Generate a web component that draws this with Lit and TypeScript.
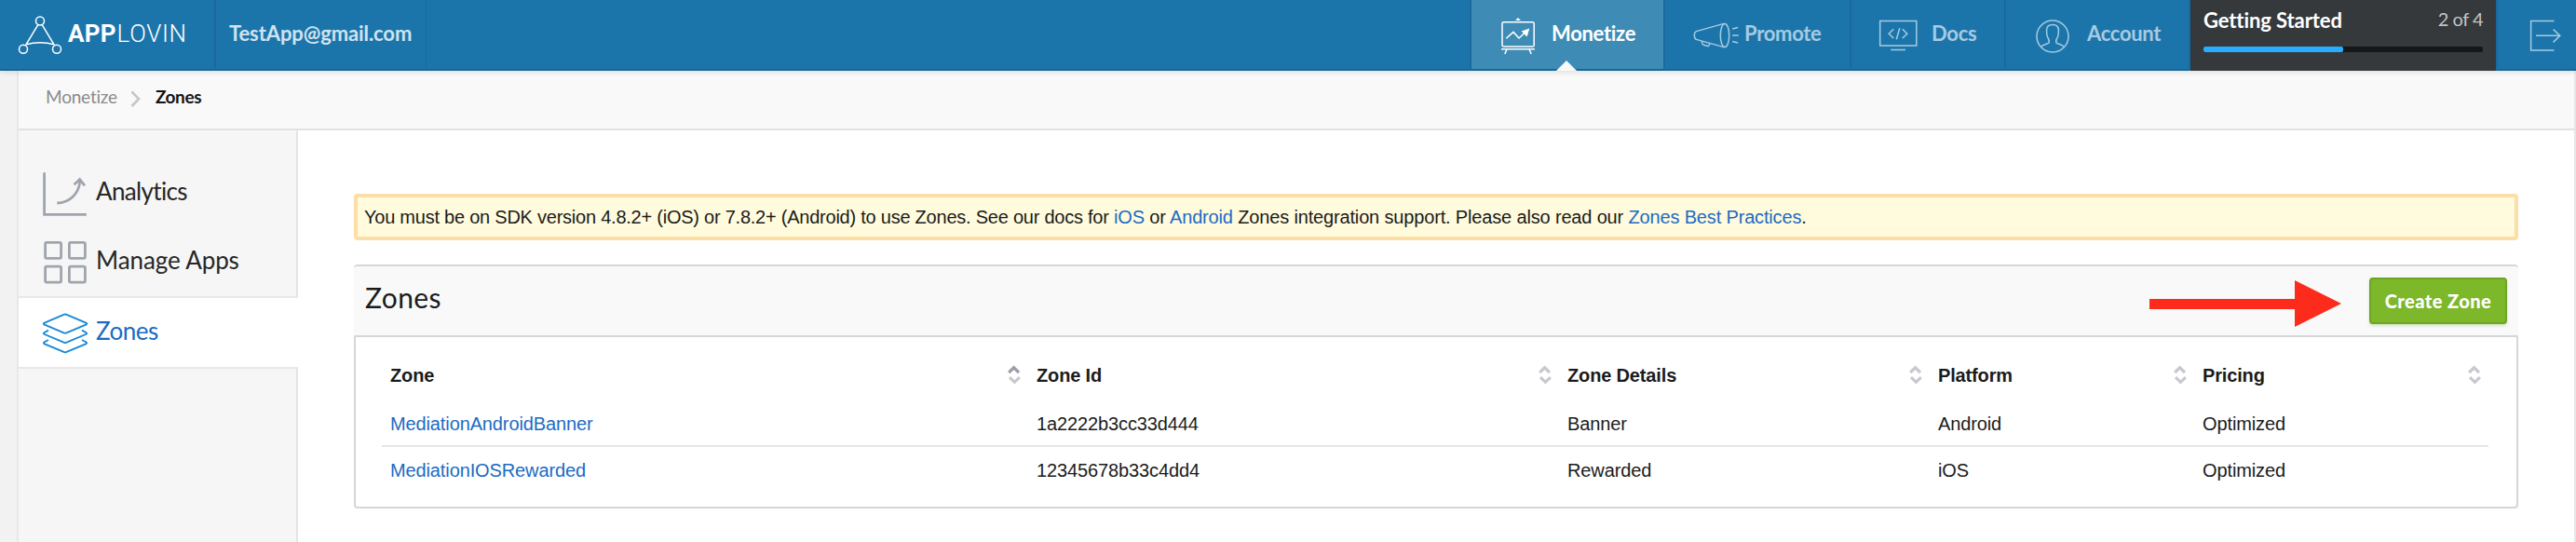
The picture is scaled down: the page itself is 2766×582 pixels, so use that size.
import { LitElement, html, css, svg } from "lit";
import { customElement, property } from "lit/decorators.js";
import { classMap } from "lit/directives/class-map.js";

const columns = ["Zone", "Zone Id", "Zone Details", "Platform", "Pricing"];
const zones = [
  ["MediationAndroidBanner", "1a2222b3cc33d444", "Banner", "Android", "Optimized"],
  ["MediationIOSRewarded", "12345678b33c4dd4", "Rewarded", "iOS", "Optimized"],
];

const logo = svg`
  <circle cx="43" cy="22.5" r="4.5"/><circle cx="25" cy="52.7" r="4.5"/><circle cx="61" cy="52.7" r="4.5"/>
  <path d="M40.8 26.6 28 47.8Q43 43.8 58 47.8L45.2 26.6"/>`;
const board = svg`
  <rect x="1613" y="23.7" width="34.2" height="26.3" rx="1.6"/>
  <path d="M1612 52.8H1648M1618 53l-2.2 5M1642 53l2.2 5"/>
  <path d="M1617.3 41.2 1625 34.4 1631 41 1638.5 34"/>
  <path class="solid" d="M1642.3 30.6 1633.6 33.4 1639.6 39.6ZM1627 22 1630 19 1633 22Z"/>`;
const megaphone = svg`
  <path d="M1851 25.4 1821.5 33.6Q1819.3 34.4 1819.3 38T1821.5 42.4L1851 50.6"/>
  <ellipse cx="1852" cy="38" rx="4.7" ry="12.6"/>
  <path d="M1827 44.2 1828.2 47.3Q1828.6 48 1829.4 48.2L1833.6 49.4Q1834.6 49.6 1835 48.8L1835.8 46.8M1860.2 31l6-1.5M1860.2 38h6.6M1860.2 44.5l6 1.5"/>`;
const monitor = svg`
  <path d="M2018.7 22.6H2057.8V49H2018.7ZM2030.3 53.4H2046" />
  <path d="M2033.2 31.3 2028.2 36.2 2033.2 41M2039.8 30.3 2036.3 42.2M2042.8 31.3 2047.8 36.2 2042.8 41"/>`;
const person = svg`
  <circle cx="2204" cy="39" r="17"/>
  <path d="M2191.7 50.3C2193.5 47.3 2199 47.8 2200.2 45.6 2200.6 43 2199.8 41.6 2198.8 40.2 2197.6 38 2197.6 35 2197.6 32.4 2197.6 28.4 2200 26.4 2204 26.4S2210.4 28.4 2210.4 32.4C2210.4 35 2210.4 38 2209.2 40.2 2208.2 41.6 2207.4 43 2207.8 45.6 2209 47.8 2214.5 47.3 2216.3 50.3"/>`;
const exit = svg`
  <path d="M2742.5 22.6H2717.6V54H2742.5M2723 38.3H2748.6M2741.6 31.6 2748.8 38.3 2741.6 45.4"/>`;
const chart = svg`
  <path d="M47.6 185.3V230.4H92.8M61.3 218C75 217.6 85.2 207.5 85.8 194M79.6 198.3 85.6 192.6 91 199.4"/>`;
const squares = svg`
  <rect x="48.6" y="260.4" width="17" height="17" rx="1.6"/><rect x="74.4" y="260.4" width="17" height="17" rx="1.6"/>
  <rect x="48.6" y="286.2" width="17" height="17" rx="1.6"/><rect x="74.4" y="286.2" width="17" height="17" rx="1.6"/>`;
const layers = svg`
  <path d="M47.3 346.8 69 337.7Q70 337.2 71 337.7L92.7 346.8Q93.8 347.6 92.7 348.4L71 357.5Q70 358 69 357.5L47.3 348.4Q46.2 347.6 47.3 346.8Z"/>
  <path d="M52 354.7 47.4 357.2Q46.4 358 47.4 358.8L69 367.9Q70 368.3 71 367.9L92.6 358.8Q93.6 358 92.6 357.2L88 354.7M52 365 47.4 367.5Q46.4 368.3 47.4 369.1L69 378.2Q70 378.6 71 378.2L92.6 369.1Q93.6 368.3 92.6 367.5L88 365"/>`;

@customElement("app-header")
class AppHeader extends LitElement {
  static styles = css`
    :host { display: flex; position: relative; z-index: 1; height: 76px; box-sizing: border-box; background: #1c75aa;
      font: 700 22px/71px Lato, sans-serif; color: #a5cbe2; white-space: nowrap;
      box-shadow: 0 1px 6px rgba(0, 0, 0, 0.13); }
    .shade { box-shadow: inset 0 -2px 0 #1b6496; }
    svg { display: block; fill: none; stroke: currentColor; stroke-width: 1.5; flex: none; }
    .solid { fill: currentColor; stroke: none; }
    .brand { display: flex; width: 230px; border-right: 2px solid #1a6a9b; color: #fff; }
    .word { font: 700 26px/72px Roboto, sans-serif; letter-spacing: 0.2px; }
    .word span { font-weight: 300; letter-spacing: 0.7px; margin-left: 1px; }
    .user { width: 211px; padding-left: 14px; border-right: 1px solid #1a6a9b; color: #cfe3f0; letter-spacing: -0.1px;
      box-sizing: border-box; width: 226px; }
    .fill { flex: 1; border-right: 2px solid #1a6a9b; }
    .item { display: flex; border-right: 2px solid #1a6a9b; letter-spacing: -0.3px; position: relative; }
    .monetize { width: 206px; background: #3e8bb6; color: #fff; }
    .monetize::after { content: ""; position: absolute; left: 91px; bottom: 0; border: 11px solid transparent; border-top: 0; border-bottom-color: #f9f9f9; }
    .promote { width: 198px; } .docs { width: 164px; } .account { width: 196px; }
    .start { width: 328px; box-sizing: border-box; padding: 0 14px; background: #35393c; color: #fff; }
    .line { display: flex; justify-content: space-between; height: 43px; line-height: 44px; letter-spacing: -0.1px; }
    .count { font-weight: 400; font-size: 20px; line-height: 41px; letter-spacing: -0.5px; color: #c3c4c5; }
    .track { height: 6px; margin-top: 7px; border-radius: 2px; background: #141819; overflow: hidden; }
    .bar { width: 50%; height: 6px; background: #29adff; border-radius: 0 2px 2px 0; }
    .exit { width: 84px; border-left: 2px solid #1a6a9b; }
  `;
  render() {
    const item = (name: string, icon: unknown, label: string, x: number, w: number) => html`
      <div class="item shade ${name}"><svg width=${w} height="76" viewBox="${x} 0 ${w} 76">${icon}</svg>${label}</div>`;
    return html`
      <div class="brand shade"><svg width="73" height="76" viewBox="0 0 73 76">${logo}</svg><div class="word">APP<span>LOVIN</span></div></div>
      <div class="user shade">TestApp@gmail.com</div>
      <div class="fill shade"></div>
      ${item("monetize", board, "Monetize", 1580, 86)}
      ${item("promote", megaphone, "Promote", 1788, 85)}
      ${item("docs", monitor, "Docs", 1988, 86)}
      ${item("account", person, "Account", 2154, 87)}
      <div class="start">
        <div class="line"><span>Getting Started</span><span class="count">2 of 4</span></div>
        <div class="track"><div class="bar"></div></div>
      </div>
      <div class="exit shade"><svg width="84" height="76" viewBox="2682 0 84 76">${exit}</svg></div>`;
  }
}

@customElement("side-nav")
class SideNav extends LitElement {
  static styles = css`
    :host { display: block; width: 300px; box-sizing: border-box; padding-top: 32px; background: #f6f6f6;
      box-shadow: inset -2px 0 0 #e5e5e5; font: 400 26px/66px Lato, sans-serif; color: #272727; }
    .item { display: flex; height: 74px; letter-spacing: -0.1px; }
    .item.tight { letter-spacing: -0.65px; }
    .item.active { height: 72px; padding-top: 2px; background: #fff; color: #1c6bc4; letter-spacing: -0.5px;
      box-shadow: 0 -2px 0 #e8e8e8, 0 2px 0 #e8e8e8; }
    svg { display: block; width: 83px; height: 74px; fill: none; stroke: #9fa4ae; stroke-width: 2.8; flex: none; }
    .active svg { stroke: #1a8ad6; stroke-width: 1.9; height: 72px; }
  `;
  render() {
    return html`
      <div class="item tight"><svg viewBox="20 172 83 74">${chart}</svg>Analytics</div>
      <div class="item"><svg viewBox="20 246 83 74">${squares}</svg>Manage Apps</div>
      <div class="item active"><svg viewBox="20 322 83 72">${layers}</svg>Zones</div>`;
  }
}

@customElement("sort-mark")
class SortMark extends LitElement {
  @property({ type: Boolean }) active = false;
  static styles = css`
    :host { display: block; }
    svg { display: block; fill: none; stroke: #c8c8cf; stroke-width: 3.2; }
    .on { stroke: #9d9daa; }
  `;
  render() {
    return html`<svg width="14" height="22" viewBox="0 0 14 22">
      <path class=${classMap({ on: this.active })} d="M1.2 8 6.6 2.8 12 8"/><path d="M2 13.2 7.4 18.4 12.8 13.2"/></svg>`;
  }
}

@customElement("app-root")
class AppRoot extends LitElement {
  static styles = css`
    :host { display: block; height: 582px; overflow: hidden; background: #f2f2f2; color: #1b1b1b;
      font: 400 20px/50px "Liberation Sans", Arial, sans-serif; }
    .page { margin-left: 20px; height: 506px; border-right: 2px solid #e6e6e6; background: #fff;
      box-shadow: -2px 0 0 #e8e8e8; }
    .crumbs { display: flex; height: 62px; padding-left: 29px; border-bottom: 2px solid #e2e2e2; background: #f9f9f9;
      font: 400 19px/55px Lato, sans-serif; letter-spacing: -0.2px; color: #8b8b8b; }
    .crumbs svg { margin: 21px 15px 0 14px; fill: none; stroke: #c6c6c6; stroke-width: 2.6; }
    .crumbs b { font-weight: 700; letter-spacing: -0.4px; color: #141414; }
    .body { display: flex; height: 442px; }
    .main { flex: 1; padding: 68px 60px 0; }
    .notice { height: 42px; border: 4px solid #fddea6; border-radius: 4px; background: #fffbdc; padding-left: 7px;
      line-height: 42px; letter-spacing: -0.16px; white-space: nowrap; }
    .lead { letter-spacing: -0.235px; }
    a { color: #1c6bc4; text-decoration: none; }
    .head { display: flex; justify-content: space-between; height: 74px; margin-top: 26px; padding: 0 12px;
      border-top: 2px solid #d6d6d6; border-radius: 4px 4px 0 0; background: #f9f9f9; }
    h2 { margin: 0; font: 400 30px/67px Lato, sans-serif; letter-spacing: 0.4px; }
    .actions { display: flex; gap: 30px; }
    .arrow { display: block; margin-top: 15px; fill: #fd2b1c; }
    button { width: 148px; height: 50px; margin: 12px 0 0; padding: 0; border: 2px solid #6da524; border-radius: 4px; background: #7db72a;
      box-shadow: 0 2px 3px rgba(109, 165, 36, 0.25); color: #fff; font: 900 20px/46px Lato, sans-serif; letter-spacing: 0.45px; }
    .table { height: 182px; border: 2px solid #d6d6d6; border-radius: 0 0 4px 4px; }
    .rows { padding: 18px 30px 0 28px; letter-spacing: -0.12px; }
    .row { display: grid; grid-template-columns: 694fr 570fr 398fr 284fr 316fr; height: 50px; box-sizing: border-box; }
    .first { border-bottom: 2px solid #e6e6e6; }
    .cell { padding: 0 8px 0 9px; }
    .top { display: flex; justify-content: space-between; font-weight: 700; line-height: 46px; letter-spacing: -0.15px; }
    .top sort-mark { margin-top: 12px; }
  `;
  render() {
    return html`
      <app-header></app-header>
      <div class="page">
        <div class="crumbs"><span>Monetize</span><svg width="12" height="18" viewBox="0 0 12 18"><path d="M1.5 1.5 9 9.2 1.5 17"/></svg><b>Zones</b></div>
        <div class="body">
          <side-nav></side-nav>
          <div class="main">
            <div class="notice"><span class="lead">You must be on SDK version 4.8.2+ (iOS) or 7.8.2+ (Android) to use Zones. See our docs for </span><a>iOS</a> or <a>Android</a> Zones integration support. Please also read our <a>Zones Best Practices</a>.</div>
            <div class="head">
              <h2>Zones</h2>
              <div class="actions">
                <svg class="arrow" width="206" height="50" viewBox="0 0 206 50"><path d="M0 20H156V0L206 25 156 50V31H0Z"/></svg>
                <button>Create Zone</button>
              </div>
            </div>
            <div class="table"><div class="rows">
              <div class="row">${columns.map((c, i) => html`<div class="cell top">${c}<sort-mark ?active=${i === 0}></sort-mark></div>`)}</div>
              ${zones.map((z, r) => html`<div class="row ${classMap({ first: r === 0 })}">
                ${z.map((v, i) => html`<div class="cell">${i === 0 ? html`<a>${v}</a>` : v}</div>`)}</div>`)}
            </div></div>
          </div>
        </div>
      </div>`;
  }
}
